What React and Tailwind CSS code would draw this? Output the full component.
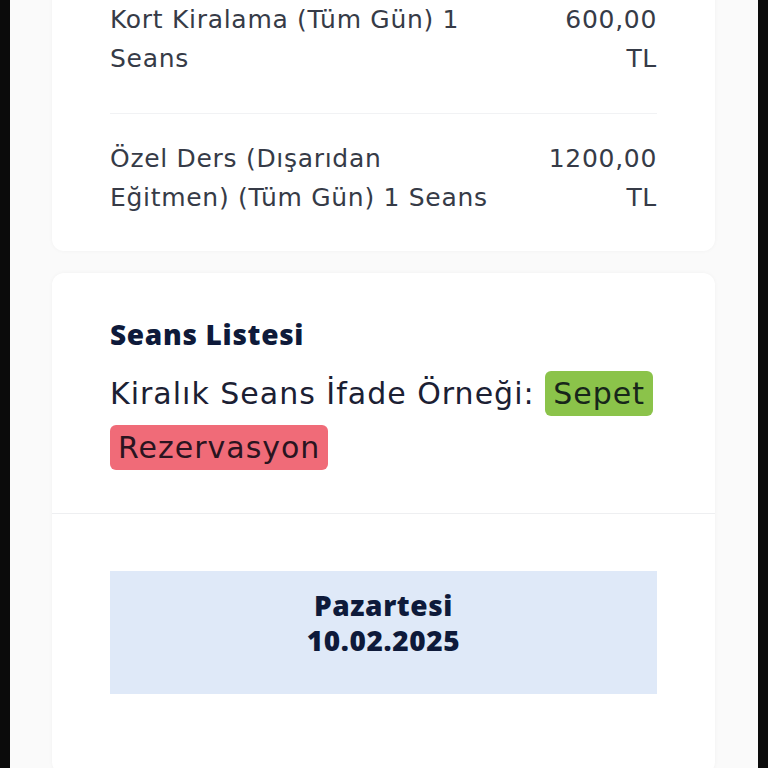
const items = [
  { lines: ['Kort Kiralama (Tüm Gün) 1', 'Seans'], price: '600,00', pad: 'pt-0 pb-[35px]' },
  { lines: ['Özel Ders (Dışarıdan', 'Eğitmen) (Tüm Gün) 1 Seans'], price: '1200,00', pad: 'pt-[25px] pb-0' },
];

const PriceRow = ({ item, last }) => (
  <div className={`flex items-start justify-between gap-6 ${item.pad} ${last ? '' : 'border-b border-[#f1f2f4]'}`}>
    <p className="text-[25px] leading-[39px] tracking-[0.7px] text-[#363b47]">
      {item.lines.map((l) => (
        <span key={l} className="block">{l}</span>
      ))}
    </p>
    <p className="w-[120px] text-right text-[25px] leading-[39px] tracking-[0.7px] text-[#363b47]">
      <span className="block">{item.price}</span>
      <span className="block">TL</span>
    </p>
  </div>
);

export default function App() {
  return (
    <div className="flex h-[768px] overflow-hidden bg-black font-['DejaVu_Sans',sans-serif]">
      <div className="w-[10px] shrink-0 bg-[#0b0b0b]" />
      <div className="flex-1 bg-[#fafafa] pl-[42px] pr-[43px]">
        {/* Price card (scrolled, top cut off) */}
        <div className="mt-[-24px] rounded-xl bg-white px-[58px] pt-6 pb-[34px] shadow-[0_0_4px_rgba(0,0,0,0.04)]">
          {items.map((item, i) => (
            <PriceRow key={item.price} item={item} last={i === items.length - 1} />
          ))}
        </div>

        {/* Session list card */}
        <div className="mt-[22px] rounded-xl bg-white shadow-[0_0_4px_rgba(0,0,0,0.04)]">
          <div className="border-b border-[#eeeff1] px-[58px] pt-[43px] pb-[38px]">
            <h3 className="font-['Open_Sans',sans-serif] text-[28px] leading-[36px] font-extrabold tracking-[0.7px] text-[#0e1a3a]">
              Seans Listesi
            </h3>
            <p className="mt-[15px] text-[30px] leading-[54px] tracking-[1px] text-[#1b2033]">
              Kiralık Seans İfade Örneği:{' '}
              <span className="inline-block rounded-md bg-[#8bc34a] px-[8px] leading-[45px] text-[#17261a]">Sepet</span>{' '}
              <span className="inline-block rounded-md bg-[#f06b78] px-[8px] leading-[45px] text-[#2a1420]">Rezervasyon</span>
            </p>
          </div>
          <div className="px-[58px] pt-[57px] pb-20">
            <div className="bg-[#dfe9f8] pt-[17px] pb-[36px] text-center font-['Open_Sans',sans-serif] text-[28px] leading-[35px] font-extrabold tracking-[0.6px] text-[#0e1a3a]">
              <div>Pazartesi</div>
              <div>10.02.2025</div>
            </div>
          </div>
        </div>
      </div>
      <div className="w-[10px] shrink-0 bg-[#0b0b0b]" />
    </div>
  );
}
